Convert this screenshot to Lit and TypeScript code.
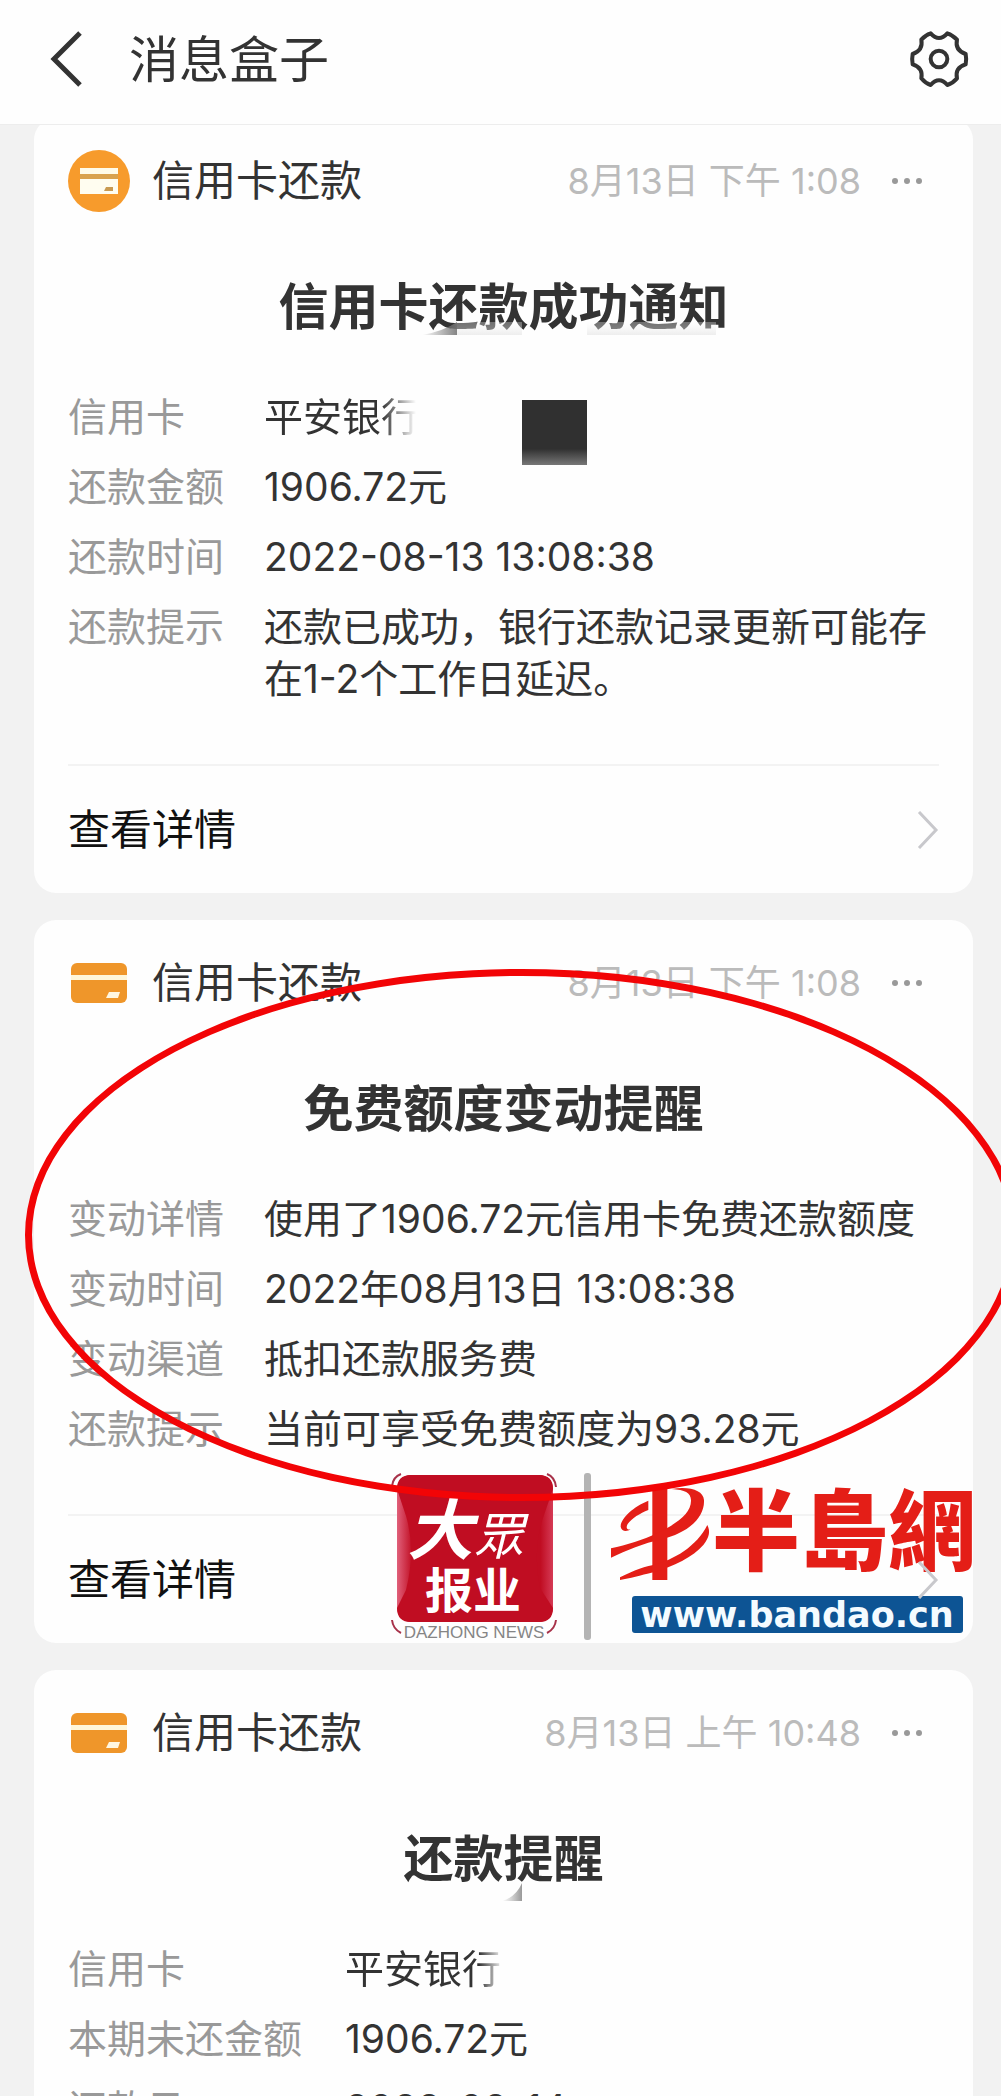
import { LitElement, html, svg, css, nothing } from "lit";
import { customElement, property } from "lit/decorators.js";

interface Row {
  label: string;
  value: string;
  fade?: boolean;
  redacted?: boolean;
}

interface Message {
  time: string;
  title: string;
  rows: Row[];
  round?: boolean;
  wide?: boolean;
  marked?: boolean;
  smudge?: "long" | "short";
}

const MESSAGES: Message[] = [
  {
    time: "8月13日 下午 1:08",
    title: "信用卡还款成功通知",
    round: true,
    smudge: "long",
    rows: [
      { label: "信用卡", value: "平安银行", fade: true, redacted: true },
      { label: "还款金额", value: "1906.72元" },
      { label: "还款时间", value: "2022-08-13 13:08:38" },
      { label: "还款提示", value: "还款已成功，银行还款记录更新可能存在1-2个工作日延迟。" },
    ],
  },
  {
    time: "8月13日 下午 1:08",
    title: "免费额度变动提醒",
    marked: true,
    rows: [
      { label: "变动详情", value: "使用了1906.72元信用卡免费还款额度" },
      { label: "变动时间", value: "2022年08月13日 13:08:38" },
      { label: "变动渠道", value: "抵扣还款服务费" },
      { label: "还款提示", value: "当前可享受免费额度为93.28元" },
    ],
  },
  {
    time: "8月13日 上午 10:48",
    title: "还款提醒",
    wide: true,
    smudge: "short",
    rows: [
      { label: "信用卡", value: "平安银行", fade: true },
      { label: "本期未还金额", value: "1906.72元" },
      { label: "还款日", value: "2022-08-14" },
    ],
  },
];

const roundIcon = html`<svg class="icon" viewBox="0 0 62 62" aria-hidden="true">
  <circle cx="31" cy="31" r="31" fill="#f79b2c" />
  <path d="M12 18h38v6H12z" fill="#fffbe8" />
  <path d="M12 24h38v5H12z" fill="#d9a24e" />
  <path d="M12 29h38v15H12z" fill="#fffdf0" />
  <path d="M38 37h7v4h-9z" fill="#c99a52" />
</svg>`;

const cardIcon = html`<svg class="icon" viewBox="0 0 62 62" aria-hidden="true">
  <rect x="3" y="11" width="56" height="40" rx="6" fill="#ef962a" />
  <path d="M3 23h56v5H3z" fill="#fff6d8" />
  <path d="M41 40h11l-2 6H38z" fill="#fff6e0" />
</svg>`;

const corner = (d: string) => svg`<path d=${d} fill="none" stroke="#a8324a" stroke-width="2" />`;

const watermark = html`<svg class="watermark" viewBox="390 1470 590 172" role="img" aria-label="大眾报业 半島網">
  <defs>
    <linearGradient id="sheen">
      <stop offset="0" stop-color="#e0607a" />
      <stop offset=".1" stop-color="#c00d22" />
      <stop offset=".92" stop-color="#c00d22" />
      <stop offset="1" stop-color="#d53a55" />
    </linearGradient>
  </defs>
  <rect x="397" y="1475" width="156" height="147" rx="14" fill="url(#sheen)" />
  <path d="M411 1475H539Q553 1475 553 1489L544 1515Q532 1550 540 1588L553 1608Q553 1622 539 1622H411Q397 1622 397 1608L406 1590Q416 1550 406 1516L397 1489Q397 1475 411 1475Z" fill="#c00d22" />
  ${corner("M392 1486Q393 1477 401 1474")}
  ${corner("M547 1474Q555 1477 556 1487")}
  ${corner("M392 1620Q393 1629 401 1633")}
  ${corner("M556 1620Q555 1629 547 1633")}
  <text class="brush" x="407" y="1554" font-size="66">大</text>
  <text class="brush thin" x="474" y="1554" font-size="50">眾</text>
  <text class="press" x="473" y="1608" font-size="48" text-anchor="middle">报业</text>
  <text class="latin" x="474" y="1638" font-size="17" text-anchor="middle">DAZHONG NEWS</text>
  <rect x="584" y="1473" width="7" height="167" rx="3" fill="#b4b4b4" />
  <g transform="translate(590 1450) scale(.3333)" fill="#e41e17">
    <path d="M187 115H232V390H187Z" />
    <path d="M245 117C300 108 340 122 342 150C345 205 290 250 215 268C160 280 110 302 63 323V295C110 285 160 270 200 250C260 222 305 190 303 150C302 128 285 120 245 117Z" />
    <path d="M352 225C362 245 358 262 340 285C310 320 250 350 190 367C150 377 120 385 90 390V382C120 368 150 352 190 345C250 330 320 290 352 225Z" />
    <path d="M175 152V180C150 190 125 205 113 222C105 238 115 240 122 238C110 246 95 245 92 230C92 205 130 170 175 152Z" />
  </g>
  <text class="island" x="712" y="1563" font-size="88">半島網</text>
  <rect x="632" y="1596" width="331" height="37" rx="3" fill="#0d5494" />
  <text class="site" x="797" y="1627" font-size="35" text-anchor="middle">www.bandao.cn</text>
</svg>`;

@customElement("message-card")
class MessageCard extends LitElement {
  @property({ attribute: false }) message!: Message;

  static styles = css`
    :host {
      display: block;
      position: relative;
      background: #fefefe;
      border-radius: 22px;
      color: #333;
    }
    .head {
      display: flex;
      align-items: center;
      height: 62px;
      padding: 32px 34px 0;
      line-height: 56px;
    }
    .icon {
      width: 62px;
      height: 62px;
      margin-right: 22px;
    }
    .source {
      flex: 1;
      font-size: 42px;
    }
    .time {
      font-size: 36px;
      color: #bbb;
    }
    .more {
      display: flex;
      border: 0;
      background: none;
      padding: 16px;
      margin-left: 14px;
    }
    .more svg {
      width: 32px;
      height: 8px;
    }
    .title {
      position: relative;
      margin: 60px 0 49px;
      font-size: 50px;
      line-height: 70px;
      font-weight: 700;
      text-align: center;
    }
    .smudge {
      position: absolute;
      left: 50%;
    }
    .smudge.long {
      width: 300px;
      height: 14px;
      bottom: 7px;
      margin-left: -82px;
    }
    .smudge.short {
      width: 20px;
      height: 18px;
      bottom: -7px;
      margin-left: -2px;
    }
    .rows {
      display: grid;
      grid-template-columns: 196px 1fr;
      row-gap: 18px;
      margin: 0;
      padding: 0 34px;
      font-size: 39px;
      line-height: 52px;
    }
    .rows.wide {
      grid-template-columns: 277px 1fr;
    }
    dt {
      color: #999;
    }
    dd {
      position: relative;
      margin: 0;
    }
    .fade {
      color: transparent;
      background: linear-gradient(90deg, #333 118px, #fefefe 152px) 0 0 / 156px 100% no-repeat;
      -webkit-background-clip: text;
      background-clip: text;
    }
    .wide .fade {
      background-image: linear-gradient(90deg, #333 134px, #e8e8e8 156px);
    }
    .redaction {
      position: absolute;
      left: 258px;
      top: 9px;
      width: 65px;
      height: 65px;
      background: linear-gradient(#303030 75%, #777);
    }
    .link {
      display: flex;
      align-items: center;
      justify-content: space-between;
      height: 127px;
      margin: 59px 34px 0;
      border-top: 2px solid #f3f3f3;
      color: #111;
      font-size: 42px;
      line-height: 56px;
      text-decoration: none;
    }
    .link svg {
      position: relative;
      width: 22px;
      height: 38px;
    }
    .ring {
      position: absolute;
      top: 49px;
      bottom: 142px;
      left: -9px;
      right: -45px;
      box-sizing: border-box;
      border: 7px solid #f20406;
      border-radius: 50%;
      pointer-events: none;
    }
    .watermark {
      position: absolute;
      right: -7px;
      bottom: 1px;
      width: 590px;
      height: 172px;
    }
    .brush,
    .press,
    .island {
      font-family: "Noto Sans CJK TC", sans-serif;
      font-weight: 700;
      fill: #fff;
    }
    .press {
      font-family: "Noto Sans CJK SC", sans-serif;
    }
    .brush {
      font-style: italic;
    }
    .thin {
      font-weight: 400;
    }
    .island {
      font-weight: 900;
      fill: #e41e17;
    }
    .latin {
      font-family: "Liberation Sans", sans-serif;
      fill: #858585;
    }
    .site {
      font-family: "DejaVu Sans", sans-serif;
      font-weight: 700;
      fill: #f4fbff;
    }
  `;

  private smudge(kind?: "long" | "short") {
    if (kind === "long") {
      return html`<svg class="smudge long" viewBox="0 0 300 14" aria-hidden="true">
        <defs>
          <linearGradient id="a"><stop stop-color="#777" stop-opacity="0" /><stop offset="1" stop-color="#777" stop-opacity=".9" /></linearGradient>
          <linearGradient id="b" x2="0" y2="1"><stop stop-color="#fff" stop-opacity=".3" /><stop offset="1" stop-color="#ddd" stop-opacity=".5" /></linearGradient>
        </defs>
        <path d="M0 14Q22 10 35 1V14Z" fill="url(#a)" />
        <path d="M35 1H100V14H35ZM165 1H294V14H165Z" fill="url(#b)" />
      </svg>`;
    }
    if (kind === "short") {
      return html`<svg class="smudge short" viewBox="0 0 20 18" aria-hidden="true">
        <defs><linearGradient id="c"><stop stop-color="#aaa" stop-opacity="0" /><stop offset="1" stop-color="#999" /></linearGradient></defs>
        <path d="M0 18Q14 14 20 0V18Z" fill="url(#c)" />
      </svg>`;
    }
    return nothing;
  }

  render() {
    const m = this.message;
    return html`
      <div class="head">
        ${m.round ? roundIcon : cardIcon}
        <span class="source">信用卡还款</span>
        <span class="time">${m.time}</span>
        <button class="more" aria-label="更多">
          <svg viewBox="0 0 32 8" fill="#999"><circle cx="4" cy="4" r="3" /><circle cx="16" cy="4" r="3" /><circle cx="28" cy="4" r="3" /></svg>
        </button>
      </div>
      <h2 class="title">${m.title}${this.smudge(m.smudge)}</h2>
      <dl class="rows ${m.wide ? "wide" : ""}">
        ${m.rows.map(
          (r) => html`<dt>${r.label}</dt>
            <dd>
              ${r.fade ? html`<span class="fade">${r.value}</span>` : r.value}${r.redacted
                ? html`<span class="redaction"></span>`
                : nothing}
            </dd>`,
        )}
      </dl>
      ${m.marked ? html`${watermark}<div class="ring"></div>` : nothing}
      <a class="link" href="#">
        查看详情
        <svg viewBox="0 0 22 38" fill="none" stroke="#c8c8cc" stroke-width="3" aria-hidden="true"><path d="M2 1L19 19L2 37" /></svg>
      </a>
    `;
  }
}

@customElement("app-root")
class AppRoot extends LitElement {
  static styles = css`
    :host {
      display: flex;
      flex-direction: column;
      height: 100vh;
      overflow: hidden;
      background: #f2f2f2;
      color: #333;
      font-family: Inter, "Noto Sans CJK SC", sans-serif;
    }
    header {
      position: relative;
      z-index: 1;
      flex: none;
      display: flex;
      align-items: center;
      height: 118px;
      padding: 0 32px 6px 46px;
      background: #fefefe;
      border-bottom: 1px solid #ededed;
    }
    h1 {
      flex: 1;
      margin: 0 0 0 43px;
      padding-top: 2px;
      font-size: 50px;
      line-height: 70px;
      font-weight: 400;
    }
    button {
      display: flex;
      padding: 0;
      border: 0;
      background: none;
    }
    .back svg {
      width: 40px;
      height: 56px;
    }
    .settings svg {
      width: 60px;
      height: 60px;
    }
    main {
      flex: 1;
      min-height: 0;
      overflow: hidden;
    }
    .list {
      display: flex;
      flex-direction: column;
      gap: 27px;
      margin-top: -7px;
      padding: 0 28px 0 34px;
    }
  `;

  render() {
    return html`
      <header>
        <button class="back" aria-label="返回">
          <svg viewBox="0 0 40 56" fill="none" stroke="#333" stroke-width="5"><path d="M34 2L8 28L34 54" /></svg>
        </button>
        <h1>消息盒子</h1>
        <button class="settings" aria-label="设置">
          <svg viewBox="89 53 180 180" fill="none" stroke="#333" stroke-width="12" stroke-linejoin="round">
            <path d="M154 66Q179 94 204 66Q220 71 233 85Q226 117 259 128Q262 143 259 159Q226 169 233 201Q220 216 204 221Q179 193 154 221Q138 216 126 201Q132 169 100 159Q97 143 100 128Q132 117 126 85Q138 71 154 66Z" />
            <circle cx="179" cy="143" r="25" />
          </svg>
        </button>
      </header>
      <main>
        <div class="list">${MESSAGES.map((m) => html`<message-card .message=${m}></message-card>`)}</div>
      </main>
    `;
  }
}
